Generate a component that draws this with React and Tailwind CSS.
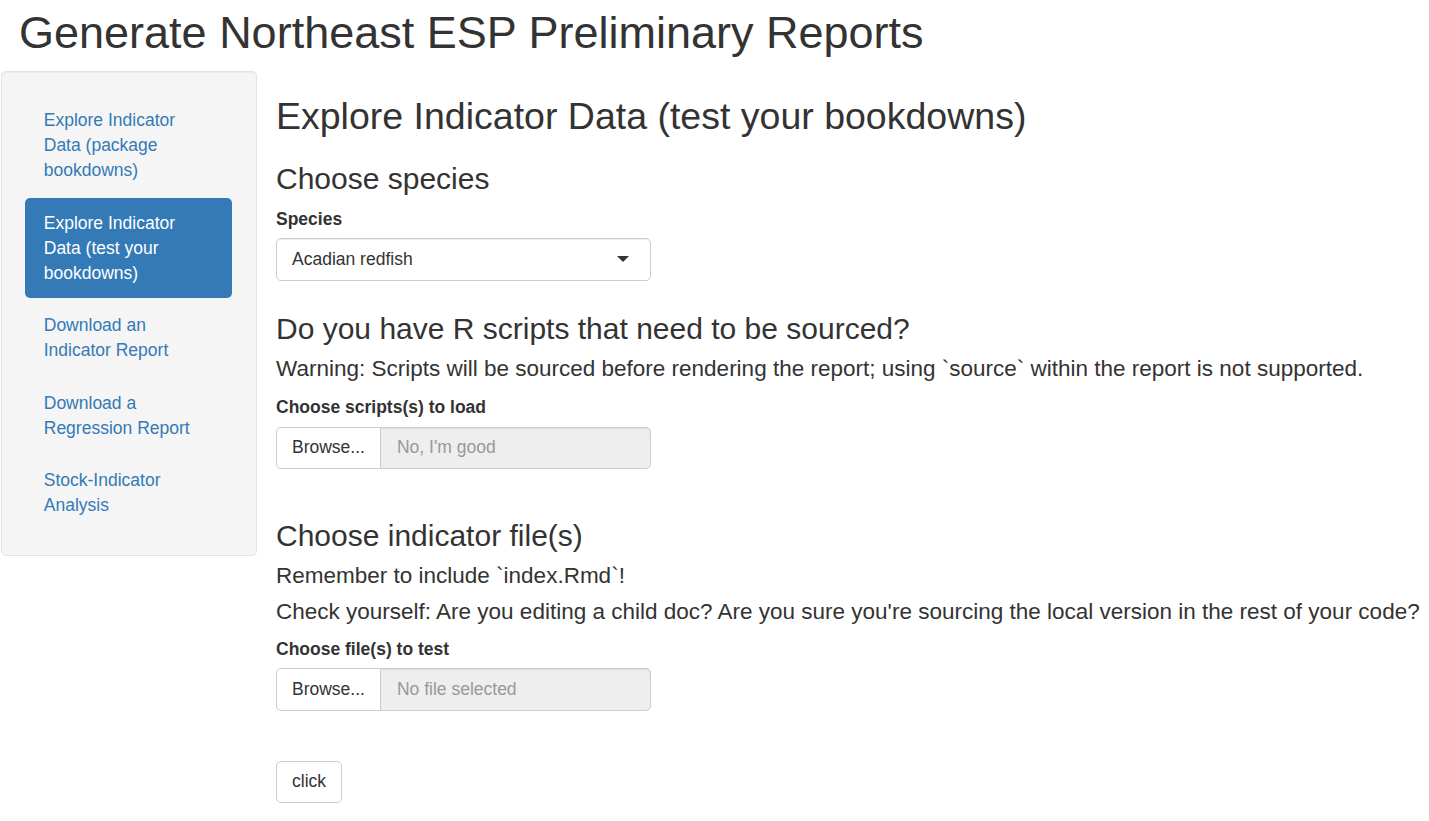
import React from "react";

const navItems = [
  { label: "Explore Indicator Data (package bookdowns)", active: false },
  { label: "Explore Indicator Data (test your bookdowns)", active: true },
  { label: "Download an Indicator Report", active: false },
  { label: "Download a Regression Report", active: false },
  { label: "Stock-Indicator Analysis", active: false },
];

const FileInput = ({ placeholder }) => (
  <div className="mt-[6.25px] flex h-[42.5px] w-[375px]">
    <button className="h-full rounded-l-[5px] border border-[#ccc] bg-white px-[15px] text-[#333]">
      Browse...
    </button>
    <div className="flex h-full flex-1 items-center rounded-r-[5px] border border-l-0 border-[#ccc] bg-[#eee] px-[16px] text-[#999] shadow-[inset_0_1px_1px_rgba(0,0,0,0.075)]">
      {placeholder}
    </div>
  </div>
);

const App = () => {
  return (
    <div className="min-h-screen bg-white font-['Liberation_Sans',Arial,sans-serif] text-[17.5px] leading-[25px] text-[#333]">
      {/* TITLE */}
      <h1 className="mb-[14px] pl-[19px] pt-[7.5px] text-[45px] font-normal leading-[49.5px]">
        Generate Northeast ESP Preliminary Reports
      </h1>

      <div className="flex items-start">
        {/* SIDEBAR NAV */}
        <div className="ml-[1px] w-[256px] shrink-0 rounded-[5px] border border-[#e3e3e3] bg-[#f5f5f5] py-[23.75px] pl-[23px] pr-[23.75px] shadow-[inset_0_1px_1px_rgba(0,0,0,0.05)]">
          <ul className="flex flex-col gap-[2.5px]">
            {navItems.map((item) => (
              <li
                key={item.label}
                className={
                  item.active
                    ? "rounded-[5px] bg-[#337ab7] px-[18.75px] py-[12.5px] text-white"
                    : "rounded-[5px] px-[18.75px] py-[12.5px] text-[#337ab7]"
                }
              >
                {item.label}
              </li>
            ))}
          </ul>
        </div>

        {/* MAIN PANEL */}
        <div className="ml-[19px] min-w-0 flex-1">
          <h2 className="mt-[25px] text-[37.5px] font-normal leading-[41.25px]">
            Explore Indicator Data (test your bookdowns)
          </h2>

          <h3 className="mt-[25px] text-[30px] font-normal leading-[33px]">Choose species</h3>
          <div className="mt-[12px]">
            <label className="block font-bold">Species</label>
            <div className="mt-[6px] flex h-[43px] w-[375px] items-center justify-between rounded-[5px] border border-[#ccc] bg-white pl-[15px] pr-[21.5px] shadow-[inset_0_1px_1px_rgba(0,0,0,0.075)]">
              <span>Acadian redfish</span>
              <span className="-mt-[2px] h-0 w-0 border-x-[6.25px] border-t-[6.25px] border-x-transparent border-t-[#333]"></span>
            </div>
          </div>

          <h3 className="mt-[31px] text-[30px] font-normal leading-[33px]">
            Do you have R scripts that need to be sourced?
          </h3>
          <p className="mt-[10.5px] text-[22.5px] leading-[25px]">
            Warning: Scripts will be sourced before rendering the report; using `source` within the report is not supported.
          </p>
          <div className="mt-[14.5px]">
            <label className="block font-bold">Choose scripts(s) to load</label>
            <FileInput placeholder="No, I'm good" />
          </div>

          <h3 className="mt-[50px] text-[30px] font-normal leading-[33px]">Choose indicator file(s)</h3>
          <p className="mt-[10.5px] text-[22.5px] leading-[25px]">Remember to include `index.Rmd`!</p>
          <p className="mt-[11px] whitespace-nowrap text-[22.5px] leading-[25px]">
            Check yourself: Are you editing a child doc? Are you sure you're sourcing the local version in the rest of your code?
          </p>
          <div className="mt-[13.5px]">
            <label className="block font-bold">Choose file(s) to test</label>
            <FileInput placeholder="No file selected" />
          </div>

          <button className="mt-[50px] rounded-[5px] border border-[#ccc] bg-white px-[15px] py-[7.5px] text-[#333]">
            click
          </button>
        </div>
      </div>
    </div>
  );
};

export default App;
